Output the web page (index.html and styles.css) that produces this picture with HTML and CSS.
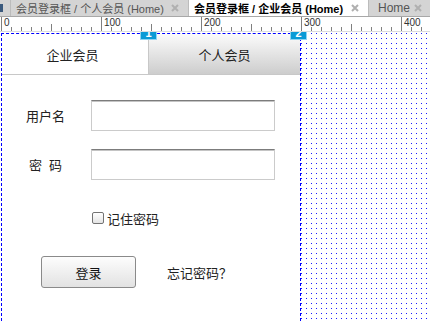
FILE: index.html
```html
<!DOCTYPE html>
<html lang="zh-CN">
<head>
    <meta charset="UTF-8">
    <title>会员登录框 / 企业会员 (Home)</title>
    <link rel="stylesheet" href="styles.css">
</head>
<body>
    <div class="tabbar">
        <span class="tabbar-edge"></span>
        <div class="doc-tab t1">会员登录框 / 个人会员 (Home)
            <svg class="close" viewBox="0 0 8 8"><path d="M1 1L7 7M7 1L1 7"/></svg>
        </div>
        <div class="doc-tab t2 active">会员登录框 / 企业会员 (Home)
            <svg class="close" viewBox="0 0 8 8"><path d="M1 1L7 7M7 1L1 7"/></svg>
        </div>
        <div class="doc-tab t3">Home
            <svg class="close" viewBox="0 0 8 8"><path d="M1 1L7 7M7 1L1 7"/></svg>
        </div>
    </div>

    <div class="ruler">
        <span>0</span><span>100</span><span>200</span><span>300</span><span>400</span>
    </div>

    <div class="canvas">
        <div class="panel">
            <div class="panel-tabs">
                <div class="panel-tab on">企业会员</div>
                <div class="panel-tab off">个人会员</div>
            </div>
            <form class="login-form" onsubmit="return false">
                <div class="field">
                    <label for="user">用户名</label>
                    <input type="text" id="user">
                </div>
                <div class="field">
                    <label for="pwd">密  码</label>
                    <input type="password" id="pwd">
                </div>
                <div class="remember">
                    <span class="check"></span>
                    <span>记住密码</span>
                </div>
                <div class="actions">
                    <button type="submit" class="login-btn">登录</button>
                    <span class="forgot">忘记密码？</span>
                </div>
            </form>
        </div>
        <div class="marker m1"><span>1</span></div>
        <div class="marker m2"><span>2</span></div>
    </div>
</body>
</html>
```

FILE: styles.css
```css
body {
    margin: 0;
    height: 321px;
    overflow: hidden;
    background: #fff;
    color: #222;
    font-family: "Liberation Sans", "Noto Sans CJK SC", sans-serif;
}

/* document tabs */
.tabbar {
    display: flex;
    height: 16px;
    background: #d4d4d4;
    border-bottom: 1px solid #a8a8a8;
    font-size: 11px;
}
.tabbar-edge {
    width: 3px;
    height: 8px;
    margin: 4px 7px 0 0;
    background: #3b5a7e;
}
.doc-tab {
    display: flex;
    align-items: center;
    justify-content: space-between;
    box-sizing: border-box;
    height: 16px;
    padding: 0 9px 0 5px;
    border-left: 1px solid #bcbcbc;
    color: #555;
    white-space: nowrap;
}
.doc-tab.t1 {
    width: 178px;
}
.doc-tab.t2 {
    width: 180px;
}
.doc-tab.t3 {
    flex: 1;
    padding-left: 9px;
    padding-right: 8px;
    font-size: 12px;
}
.doc-tab.active {
    background: #fff;
    color: #000;
    font-weight: bold;
}
.close {
    width: 8px;
    height: 8px;
    flex: none;
    stroke: #b0b0b0;
    stroke-width: 2;
}

/* ruler */
.ruler {
    display: flex;
    height: 14px;
    padding-left: 1px;
    border-bottom: 1px solid #dcdcdc;
    background-color: #fff;
    background-image:
        linear-gradient(to right, #808080 1px, transparent 1px),
        linear-gradient(to right, #808080 1px, transparent 1px),
        linear-gradient(to right, #808080 1px, transparent 1px);
    background-size: 100px 100%, 50px 7px, 10px 4px;
    background-position: 1px 0, 1px 100%, 1px 100%;
    background-repeat: repeat-x;
    font-size: 10px;
    color: #333;
}
.ruler span {
    flex: none;
    width: 100px;
    box-sizing: border-box;
    padding-left: 3px;
    line-height: 12px;
}

/* canvas */
.canvas {
    position: relative;
    display: flex;
    height: 289px;
    box-sizing: border-box;
    padding: 1px 0 0 1px;
    background-image: conic-gradient(from 270deg at 1px 1px, #1a1aff 90deg, transparent 0);
    background-size: 5px 5px;
    background-position: 1px 1px;
}
.panel {
    width: 300px;
    box-sizing: border-box;
    border: 1px dashed #0000ff;
    border-bottom: none;
    background: #fff;
}
.marker {
    position: absolute;
    top: 0;
    width: 17px;
    height: 8px;
    box-sizing: border-box;
    overflow: hidden;
    border: 1px solid #8fd4f2;
    border-top: none;
    background: #0a9ad6;
    color: #fff;
    font-size: 11px;
    font-weight: bold;
    text-align: center;
}
.marker span {
    display: block;
    margin-top: -5px;
    line-height: 12px;
}
.m1 {
    left: 140px;
}
.m2 {
    left: 290px;
}

/* panel tabs */
.panel-tabs {
    display: flex;
    height: 41px;
}
.panel-tab {
    display: flex;
    align-items: center;
    justify-content: center;
    box-sizing: border-box;
    border-bottom: 1px solid #c8c8c8;
    font-family: "Noto Sans CJK SC", sans-serif;
    font-size: 13px;
    color: #222;
}
.panel-tab.on {
    width: 146px;
    padding-right: 5px;
    background: #fff;
}
.panel-tab.off {
    flex: 1;
    border-left: 1px solid #c8c8c8;
    background: linear-gradient(#fbfbfb, #cdcdcd);
}

/* login form */
.login-form {
    margin: 0;
    padding: 25px 0 0 24px;
    font-family: "Noto Sans CJK SC", sans-serif;
    font-size: 13px;
}
.field {
    display: flex;
    align-items: center;
    margin-bottom: 18px;
}
.field label {
    width: 39px;
    margin-right: 26px;
    text-align: center;
    white-space: pre;
    font-family: "Liberation Sans", "Noto Sans CJK SC", sans-serif;
}
.field input {
    width: 184px;
    height: 31px;
    box-sizing: border-box;
    margin: 0;
    padding: 0 4px;
    border: 1px solid #cbcbcb;
    border-top-color: #7c7c7c;
    box-shadow: inset 0 1px 0 #c4c4c4;
    outline: none;
}
.remember {
    display: flex;
    align-items: center;
    height: 14px;
    margin: 31px 0 0 66px;
}
.check {
    width: 12px;
    height: 12px;
    box-sizing: border-box;
    margin-right: 3px;
    border: 1px solid #737373;
    border-radius: 2px;
    background: linear-gradient(#fff, #e4e4e4);
}
.actions {
    display: flex;
    align-items: center;
    margin: 31px 0 0 15px;
}
.login-btn {
    width: 95px;
    height: 32px;
    border: 1px solid #8a8a8a;
    border-radius: 3px;
    background: linear-gradient(#fdfdfd, #e2e2e2);
    font-family: inherit;
    font-size: 13px;
    color: #111;
}
.forgot {
    margin-left: 31px;
    font-family: "Noto Sans CJK TC", "Noto Sans CJK SC", sans-serif;
}
```
